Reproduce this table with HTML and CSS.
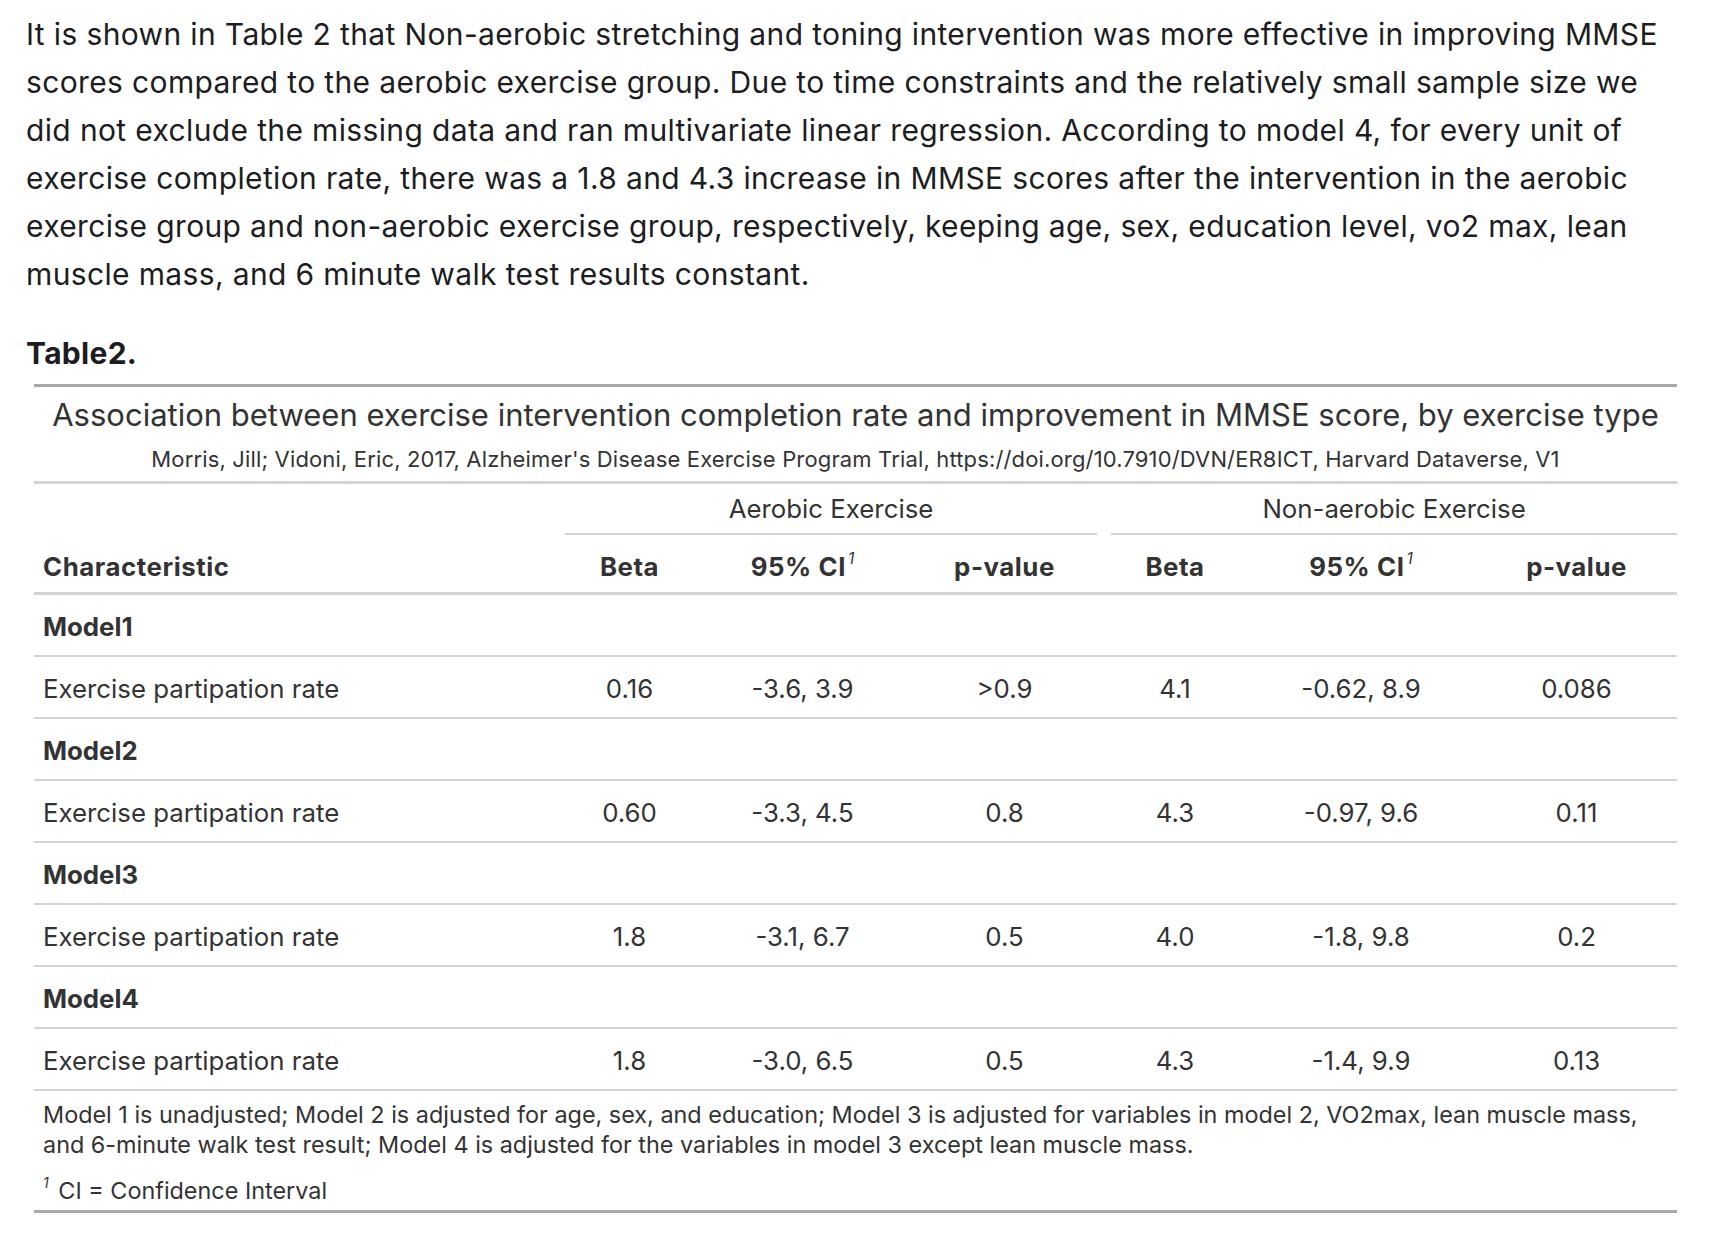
FILE: index.html
```html
<!DOCTYPE html>
<html lang="en">
<head>
<meta charset="utf-8">
<title>Table 2</title>
<link rel="stylesheet" href="styles.css">
</head>
<body>
<main class="page">
  <p class="intro">It is shown in Table 2 that Non-aerobic stretching and toning intervention was more effective in improving MMSE scores compared to the aerobic exercise group. Due to time constraints and the relatively small sample size we did not exclude the missing data and ran multivariate linear regression. According to model 4, for every unit of exercise completion rate, there was a 1.8 and 4.3 increase in MMSE scores after the intervention in the aerobic exercise group and non-aerobic exercise group, respectively, keeping age, sex, education level, vo2 max, lean muscle mass, and 6 minute walk test results constant.</p>
  <p class="table-label"><strong>Table2.</strong></p>
  <table class="gt">
    <colgroup>
      <col class="c-char">
      <col class="c-beta1">
      <col class="c-ci1">
      <col class="c-p1">
      <col class="c-beta2">
      <col class="c-ci2">
      <col class="c-p2">
    </colgroup>
    <thead>
      <tr class="heading">
        <th colspan="7">
          <div class="title">Association between exercise intervention completion rate and improvement in MMSE score, by exercise type</div>
          <div class="subtitle">Morris, Jill; Vidoni, Eric, 2017, Alzheimer's Disease Exercise Program Trial, https://doi.org/10.7910/DVN/ER8ICT, Harvard Dataverse, V1</div>
        </th>
      </tr>
      <tr class="spanners">
        <th class="blank"></th>
        <th colspan="3" class="spanner"><div class="spanner-label sp-left">Aerobic Exercise</div></th>
        <th colspan="3" class="spanner"><div class="spanner-label sp-right">Non-aerobic Exercise</div></th>
      </tr>
      <tr class="labels">
        <th class="left">Characteristic</th>
        <th>Beta</th>
        <th>95% CI<sup>1</sup></th>
        <th>p-value</th>
        <th>Beta</th>
        <th>95% CI<sup>1</sup></th>
        <th>p-value</th>
      </tr>
    </thead>
    <tbody>
      <tr class="group"><td colspan="7">Model1</td></tr>
      <tr class="data"><td class="left">Exercise partipation rate</td><td>0.16</td><td>-3.6, 3.9</td><td>&gt;0.9</td><td>4.1</td><td>-0.62, 8.9</td><td>0.086</td></tr>
      <tr class="group"><td colspan="7">Model2</td></tr>
      <tr class="data"><td class="left">Exercise partipation rate</td><td>0.60</td><td>-3.3, 4.5</td><td>0.8</td><td>4.3</td><td>-0.97, 9.6</td><td>0.11</td></tr>
      <tr class="group"><td colspan="7">Model3</td></tr>
      <tr class="data"><td class="left">Exercise partipation rate</td><td>1.8</td><td>-3.1, 6.7</td><td>0.5</td><td>4.0</td><td>-1.8, 9.8</td><td>0.2</td></tr>
      <tr class="group"><td colspan="7">Model4</td></tr>
      <tr class="data"><td class="left">Exercise partipation rate</td><td>1.8</td><td>-3.0, 6.5</td><td>0.5</td><td>4.3</td><td>-1.4, 9.9</td><td>0.13</td></tr>
    </tbody>
    <tfoot>
      <tr>
        <td colspan="7">
          <div class="source-note">Model 1 is unadjusted; Model 2 is adjusted for age, sex, and education; Model 3 is adjusted for variables in model 2, VO2max, lean muscle mass, and 6-minute walk test result; Model 4 is adjusted for the variables in model 3 except lean muscle mass.</div>
          <div class="footnote"><sup>1</sup> CI = Confidence Interval</div>
        </td>
      </tr>
    </tfoot>
  </table>
</main>
</body>
</html>
```

FILE: styles.css
```css
html, body {
  margin: 0;
  padding: 0;
  background: #ffffff;
}

body {
  font-family: Inter, "Noto Sans", "Liberation Sans", sans-serif;
  color: #1d1d1f;
}

.page {
  padding: 10px 30px 30px 26px;
}

.intro {
  margin: 0;
  font-size: 30px;
  letter-spacing: 0.36px;
  line-height: 48px;
  width: 1648px;
}

.table-label {
  margin: 31px 0 0 0;
  font-size: 30px;
  letter-spacing: 0.3px;
  line-height: 48px;
}

.table-label strong {
  font-weight: 700;
}

.gt {
  margin: 7px 0 0 8px;
  width: 1643px;
  table-layout: fixed;
  border-collapse: separate;
  border-spacing: 0;
  border-top: 3px solid #a8a8a8;
  border-bottom: 3px solid #a8a8a8;
  color: #333333;
  font-size: 25.8px;
  line-height: 30px;
}

.c-char { width: 525px; }
.c-beta1 { width: 141px; }
.c-ci1 { width: 205px; }
.c-p1 { width: 199px; }
.c-beta2 { width: 142px; }
.c-ci2 { width: 230px; }
.c-p2 { width: 201px; }

.gt th,
.gt td {
  padding: 0 9px;
  text-align: center;
  font-weight: 400;
}

.gt .left {
  text-align: left;
}

.heading th {
  padding: 10px 9px 9px;
  border-bottom: 3px solid #d3d3d3;
}

.title {
  font-size: 31px;
  line-height: 36px;
  color: #333333;
}

.subtitle {
  margin-top: 13px;
  font-size: 22px;
  letter-spacing: 0.15px;
  line-height: 26px;
  color: #333333;
}

.spanners th {
  padding: 10px 0 0;
}

.spanner-label {
  padding-bottom: 9px;
  border-bottom: 2px solid #d3d3d3;
}

.sp-left {
  margin: 0 7px 0 6px;
}

.sp-right {
  margin: 0 0 0 7px;
}

.labels th {
  padding-top: 17px;
  padding-bottom: 10px;
  font-weight: 700;
  letter-spacing: 0.55px;
  border-bottom: 3px solid #d3d3d3;
}

.labels sup,
.footnote sup {
  font-style: italic;
  font-weight: 400;
  font-size: 60%;
  letter-spacing: 0;
  line-height: 0;
  vertical-align: 0.75em;
  margin-left: 2px;
}

.gt tbody td {
  padding-top: 17px;
  padding-bottom: 13px;
  border-bottom: 2px solid #d3d3d3;
}

.group td {
  text-align: left;
  font-weight: 700;
}

.gt tfoot td {
  text-align: left;
  padding: 9px 9px 4px;
  font-size: 23.4px;
  line-height: 30px;
}

.footnote {
  margin-top: 16px;
}

.footnote sup {
  margin-left: 0;
  margin-right: 3px;
}
```
